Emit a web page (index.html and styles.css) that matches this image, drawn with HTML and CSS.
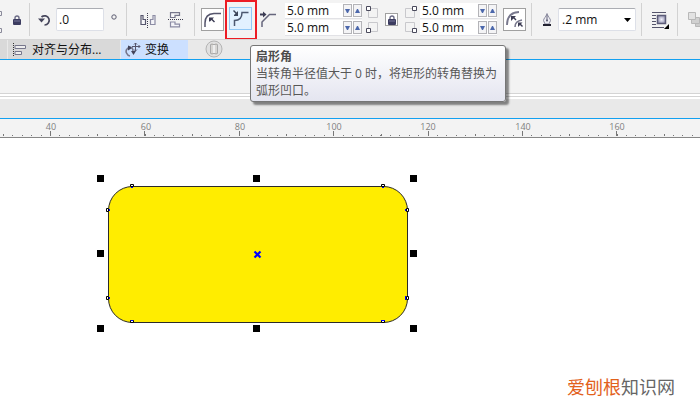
FILE: index.html
```html
<!DOCTYPE html>
<html lang="zh-CN">
<head>
<meta charset="utf-8">
<title>变换</title>
<link rel="stylesheet" href="styles.css">
</head>
<body>
<svg class="defs" aria-hidden="true">
  <defs>
    <radialGradient id="glow"><stop offset="0" stop-color="#f0f0fa"/><stop offset="1" stop-color="#9c9cb8"/></radialGradient>
    <symbol id="down" viewBox="0 0 5 4"><path d="M0 0h5L3 4H2z" fill="#4c68ac"/></symbol>
    <symbol id="up" viewBox="0 0 5 4"><path d="M0 4h5L3 0H2z" fill="#4c68ac"/></symbol>
    <symbol id="lock" viewBox="0 0 8 10"><path d="M2 5V3a2 2 0 0 1 4 0v2" fill="none" stroke="#6b6b86" stroke-width="1.4"/><rect x="0" y="4" width="8" height="6" rx="1" fill="#3c3c60"/><path d="M1 6h6" stroke="#77779a"/></symbol>
  </defs>
</svg>

<header class="toolbar">
  <div class="group group-lock">
    <svg width="2" height="26" viewBox="0 0 2 26"><path d="M0 4.5h1.5v4H0M0 21.5h1.5v4H0" fill="none" stroke="#8a8a9a"/></svg>
    <button class="plain" type="button" aria-label="锁定比率"><svg width="8" height="10"><use href="#lock"/></svg></button>
  </div>

  <div class="group group-angle">
    <svg width="14" height="14" viewBox="0 0 14 14"><path d="M3.500 4A4.600 4.600 0 1 1 6.500 12" fill="none" stroke="#46465c" stroke-width="1.700"/><path d="M0 5.500h7L3.500 9.500z" fill="#46465c"/></svg>
    <input class="field angle" type="text" value=".0" aria-label="旋转角度">
    <svg class="degree" width="6" height="6" viewBox="0 0 6 6"><circle cx="3" cy="3" r="2.2" fill="none" stroke="#5c5c70"/></svg>
  </div>

  <div class="group group-mirror">
    <button class="plain" type="button" aria-label="水平镜像"><svg width="16" height="16" viewBox="0 0 16 16"><path d="M1 3.500h2v4h2.500v5H1z" fill="#f8f8fa" stroke="#55556c" stroke-width="1.2"/><path d="M15 3.500h-2v4h-2.500v5H15z" fill="#f4f4f8" stroke="#8c8ca4" stroke-width="1.2"/><path d="M7.500 1v15" stroke="#3c3c4e" stroke-dasharray="1 1"/></svg></button>
    <button class="plain" type="button" aria-label="垂直镜像"><svg width="16" height="16" viewBox="0 0 16 16"><path d="M2.500.7h9v2.600H7v2.200H2.500z" fill="#f8f8fa" stroke="#77778c" stroke-width="1.2"/><path d="M2.500 14.800h9v-2.600H7V10H2.500z" fill="#f4f4f8" stroke="#8c8ca4" stroke-width="1.2"/><path d="M0 7.500h16" stroke="#3c3c4e" stroke-dasharray="1 1"/></svg></button>
  </div>

  <div class="group group-corner">
    <button class="boxed" type="button" aria-label="圆角"><svg width="21" height="21" viewBox="0 0 21 21"><path d="M3 18v-4Q3 5 12 4.500h7" fill="none" stroke="#55556c" stroke-width="1.500"/><path d="M7 8.500h5L10.500 10l2.500 2.500-1 1L9.500 11 8 12.500H7z" fill="#3c3c54"/></svg></button>
    <span class="marked">
      <button class="boxed active" type="button" aria-label="扇形角"><svg width="21" height="21" viewBox="0 0 21 21"><path d="M4.500 18v-5.500Q12 12.500 12 4.500h6.500" fill="none" stroke="#4c5870" stroke-width="1.500"/><path d="M8 8V3L6.500 4.500 4 2 3 3l2.500 2.500L4 7v1z" fill="#3c4458"/></svg></button>
    </span>
    <button class="plain chamfer" type="button" aria-label="倒棱角"><svg width="17" height="17" viewBox="0 0 17 17"><path d="M2 16v-5L9.500 3.500H16" fill="none" stroke="#66667c" stroke-width="1.500"/><path d="M0 3.500h4" stroke="#3c3c54" stroke-width="2"/><path d="M3 .5l3.500 3L3 6.500z" fill="#3c3c54"/></svg></button>
    <div class="pair">
      <div class="spin"><input type="text" value="5.0 mm" aria-label="左上角半径"><button type="button" aria-label="减"><svg width="5" height="4"><use href="#down"/></svg></button><button type="button" aria-label="加"><svg width="5" height="4"><use href="#up"/></svg></button></div>
      <div class="spin"><input type="text" value="5.0 mm" aria-label="左下角半径"><button type="button" aria-label="减"><svg width="5" height="4"><use href="#down"/></svg></button><button type="button" aria-label="加"><svg width="5" height="4"><use href="#up"/></svg></button></div>
    </div>
    <svg class="corners" width="12" height="28" viewBox="0 0 12 28"><path d="M2.500 2.500h9v9h-9zM2.500 16.500h9v9h-9z" fill="none" stroke="#c8c8cc"/><path d="M.5.5h4v4h-4zM.5 22.500h4v4h-4z" fill="#fff" stroke="#4a4a5c"/></svg>
    <button class="boxed small" type="button" aria-label="同时编辑所有角"><svg width="8" height="10"><use href="#lock"/></svg></button>
    <svg class="corners" width="12" height="28" viewBox="0 0 12 28"><path d="M.5 2.500h9v9h-9zM.5 16.500h9v9h-9z" fill="none" stroke="#c8c8cc"/><path d="M7.500.5h4v4h-4zM7.500 22.500h4v4h-4z" fill="#fff" stroke="#4a4a5c"/></svg>
    <div class="pair">
      <div class="spin"><input type="text" value="5.0 mm" aria-label="右上角半径"><button type="button" aria-label="减"><svg width="5" height="4"><use href="#down"/></svg></button><button type="button" aria-label="加"><svg width="5" height="4"><use href="#up"/></svg></button></div>
      <div class="spin"><input type="text" value="5.0 mm" aria-label="右下角半径"><button type="button" aria-label="减"><svg width="5" height="4"><use href="#down"/></svg></button><button type="button" aria-label="加"><svg width="5" height="4"><use href="#up"/></svg></button></div>
    </div>
    <button class="boxed relative" type="button" aria-label="相对角缩放"><svg width="21" height="21" viewBox="0 0 21 21"><path d="M3 16Q3 3.500 15 3" fill="none" stroke="#77778c" stroke-width="1.800"/><path d="M11 18q0-6 7-7" fill="none" stroke="#77778c" stroke-width="1.500"/><path d="M7 7h5l-1.500 1.500 2 2-1 1-2-2L7 12zM14 13.500h4.500L17 15l2 2-1 1-2-2-2 2z" fill="#3c3c54"/></svg></button>
  </div>

  <div class="group group-outline">
    <svg width="10" height="14" viewBox="0 0 10 14"><path d="M5 .5C4 4 1.500 5.500 1.500 7.500L3 11h4l1.500-3.500C8.500 5.500 6 4 5 .5z" fill="#eeeef4" stroke="#8c8ca0"/><path d="M5 2v5" stroke="#66667c"/><circle cx="5" cy="7.500" r="1" fill="#55556c"/><path d="M1 11h8v2H1z" fill="#222230"/></svg>
    <span class="select-wrap">
      <select class="field width" aria-label="轮廓宽度"><option>.2 mm</option></select>
      <svg class="arrow" width="7" height="4" viewBox="0 0 7 4"><path d="M0 0h7L3.500 4z" fill="#000"/></svg>
    </span>
  </div>

  <div class="group group-wrap">
    <button class="plain" type="button" aria-label="文本换行"><svg width="18" height="18" viewBox="0 0 18 18"><path d="M0 .5h14M0 3.500h4M0 6.500h4M0 9.500h4M0 12.500h4M0 15.500h12" stroke="#55556c"/><rect x="5.500" y="3.500" width="8" height="8" fill="url(#glow)" stroke="#5c5c78" stroke-width="1.500"/><path d="M17 12v5h-5z" fill="#000"/></svg></button>
  </div>
  <div class="group group-order">
    <svg width="16" height="16" viewBox="0 0 16 16"><g stroke="#b8b8b8"><path d="M7.500 7.500h8v7h-8z" fill="#ccc"/><path d="M3.500 5.500h8v6h-8z" fill="#d0d0d0"/><path d="M.5.5h7v7h-7z" fill="#e2e2e2"/></g></svg>
  </div>
</header>

<nav class="tabs">
  <span class="tab stub"></span>
  <button class="tab align" type="button">
    <svg width="14" height="14" viewBox="0 0 14 14"><path d="M.5 0v14" stroke="#333" stroke-dasharray="1 1"/><path d="M2 2.500h10.500v3H2zM2 8.500h6.500v3H2z" fill="#eee" stroke="#77778c"/></svg>
    对齐与分布...
  </button>
  <button class="tab transform" type="button">
    <svg width="16" height="15" viewBox="0 0 16 15"><path d="M5 5.500C1.500 6 .5 9 1.500 11q1 2.500 3.500 3" fill="none" stroke="#77778c" stroke-width="1.600"/><path d="M3 3.500l5 2-5 3z" fill="#44445a"/><path d="M6 5.500q2 .5 2 4" fill="none" stroke="#77778c" stroke-width="1.400"/><path d="M6 9h5l-2.500 4z" fill="#44445a"/><path d="M10.500 1v8M7 4.500h8M9 2.500L10.500 1 12 2.500M9 7.500L10.500 9 12 7.500M13.500 3L15 4.500 13.500 6" fill="none" stroke="#55556c"/></svg>
    变换
  </button>
  <svg class="disc" width="18" height="18" viewBox="0 0 18 18"><circle cx="9" cy="9" r="8" fill="#e0e0e0" stroke="#b4b4b4"/><path d="M5.500 4.500h7v9h-7z" fill="#eee" stroke="#aaa"/><path d="M7 3v12M11 3v12" stroke="#c0bdb8"/></svg>
</nav>

<div class="panel"></div>
<div class="band"></div>

<div class="ruler">
  <svg width="100%" height="18" shape-rendering="crispEdges">
    <path d="M2.800 16.500H4000" stroke="#777" stroke-width="1" stroke-dasharray="1 8.440"/>
    <path d="M3 16H4000" stroke="#777" stroke-width="2" stroke-dasharray="1 46.200"/>
    <path d="M50 14.500H4000" stroke="#777" stroke-width="5" stroke-dasharray="1 93.400"/>
    <g text-anchor="middle"><text x="51" y="11">40</text><text x="146" y="11">60</text><text x="240" y="11">80</text><text x="334" y="11">100</text><text x="428" y="11">120</text><text x="523" y="11">140</text><text x="617" y="11">160</text></g>
  </svg>
</div>

<main class="canvas">
  <svg class="drawing" width="430" height="210" viewBox="0 138 430 210">
    <rect x="108.500" y="186.500" width="299" height="136" rx="24" ry="24" fill="#ffed00" stroke="#2b2a29"/>
    <path d="M97 175h7v7h-7zM253 175h7v7h-7zM410 175h7v7h-7zM97 250h7v7h-7zM410 250h7v7h-7zM97 325h7v7h-7zM253 325h7v7h-7zM410 325h7v7h-7z" fill="#000"/>
    <g fill="#fff" stroke="#000"><path d="M130.500 184.500h3v2h-3zM381.500 184.500h3v2h-3zM130.500 320.500h3v2h-3zM381.500 320.500h3v2h-3zM106.500 208.500h2v3h-2zM406.500 208.500h2v3h-2zM106.500 296.500h2v3h-2zM406.500 296.500h2v3h-2z"/></g>
    <path d="M131 187.500h2M382 187.500h2M131 320.500h2M381 320.500h4M109.500 209v2M405.500 209v2M109.500 297v2M405.500 296v4" stroke="#00f"/>
    <path d="M254.500 251.500l6 6M260.500 251.500l-6 6" stroke="#0000ff" stroke-width="2.200"/>
  </svg>
  <p class="brand"><span>爱刨根</span>知识网</p>
</main>

<div class="tooltip" role="tooltip">
  <strong>扇形角</strong>
  <p>当转角半径值大于 0 时，将矩形的转角替换为弧形凹口。</p>
</div>
</body>
</html>
```
FILE: styles.css
```css
* { box-sizing: border-box; }

body {
  margin: 0;
  min-height: 100vh;
  display: flex;
  flex-direction: column;
  overflow: hidden;
  position: relative;
  background: #fff;
  color: #111;
  font: 12px/16px "Open Sans", "Noto Sans CJK SC", sans-serif;
}

svg { display: block; flex: none; }
button, input, select { font: inherit; color: inherit; margin: 0; padding: 0; border-radius: 0; }
p { margin: 0; }
.defs { position: absolute; width: 0; height: 0; }

.toolbar {
  display: flex;
  height: 40px;
  padding: 3px 0;
  overflow: hidden;
  background: #f3f3f3;
  border-bottom: 1px solid #d6d6d6;
}

.group {
  display: flex;
  align-items: center;
  flex: none;
  border-right: 1px solid #d2d2d2;
}
.group-lock { gap: 11px; padding-right: 8px; }
.group-angle { gap: 4px; padding: 0 9px 0 8px; }
.group-mirror { gap: 12px; padding: 0 10px 0 13px; }
.group-corner { padding: 0 5px 0 6px; }
.group-outline { gap: 6px; padding: 0 5px 0 10px; }
.group-wrap { padding: 2px 7px 0 10px; }
.group-order { padding-left: 10px; border: 0; }

.plain { display: block; border: 0; background: none; }

.field {
  height: 23px;
  border: 1px solid #dde0e8;
  border-top-color: #abadb3;
  border-radius: 2px;
  background: #fff;
}
.angle { width: 48px; padding-left: 2px; }
.degree { margin: 0 0 6px 3px; }

.boxed {
  display: flex;
  align-items: center;
  justify-content: center;
  flex: none;
  width: 23px;
  height: 23px;
  border: 1px solid #a0a0a0;
  background: #fff;
}
.boxed.active { border-color: #90c8f6; background: #e2f1ff; }
.boxed.small { width: 13px; height: 13px; margin: 0 7px; }
.boxed.relative { margin-left: 6px; }

.marked {
  flex: none;
  display: flex;
  align-items: center;
  width: 32px;
  height: 40px;
  margin: 0 3px 0 1px;
  padding: 4px 2px 7px;
  border: 2px solid #ed1c24;
  position: relative;
}
.chamfer { margin-right: 8px; }

.pair { display: flex; flex-direction: column; gap: 1px; flex: none; width: 77px; }
.pair + .corners { margin-left: 4px; }
.corners + .pair { margin-left: 3px; }
.spin {
  display: flex;
  align-items: center;
  gap: 1px;
  height: 16px;
  background: #fff;
  border-bottom: 1px solid #e2e2e6;
}
.spin input { flex: 1; min-width: 0; height: 15px; padding-left: 2px; border: 0; background: none; }
.spin button {
  display: flex;
  align-items: center;
  justify-content: center;
  width: 9px;
  height: 13px;
  border: 1px solid #b4b4b8;
  background: #f4f4f6;
}

.select-wrap { position: relative; }
.width { display: block; width: 78px; padding-left: 3px; appearance: none; }
.arrow { position: absolute; right: 5px; top: 10px; pointer-events: none; }

.tabs {
  display: flex;
  height: 20px;
  background: #e9e9e9;
  border-bottom: 1px solid #12a0f0;
}
.tab {
  display: flex;
  align-items: center;
  gap: 5px;
  height: 19px;
  border: 0;
  background: #d9d9d9;
  white-space: nowrap;
}
.stub { width: 7px; margin-right: 1px; }
.align { width: 112px; margin-right: 1px; padding-left: 5px; }
.transform { width: 67px; padding-left: 4px; gap: 4px; background: #cce0ff; }
.disc { margin-left: 17px; }

.panel {
  height: 37px;
  background: #f3f3f3;
  background-clip: padding-box;
  border-bottom: 4px double #d4d4d4;
}
.band { height: 21px; background: #e9e9e9; border-top: 2px solid #fff; }

.ruler {
  height: 20px;
  overflow: hidden;
  background: #f3f3f3;
  border-top: 1px solid #12a0f0;
  border-bottom: 1px solid #868686;
}
.ruler text { font-size: 9px; fill: #808080; }

.canvas { flex: 1; position: relative; }
.brand {
  position: absolute;
  right: 25px;
  bottom: 7px;
  color: #666;
  font: 18px/24px "Noto Sans CJK SC", sans-serif;
}
.brand span { color: #e2611c; }

.tooltip {
  position: absolute;
  left: 250px;
  top: 45px;
  width: 256px;
  padding: 2px 4px 2px 5px;
  border: 1px solid #767676;
  border-radius: 3px;
  background: linear-gradient(#fff, #e4e5f0);
  box-shadow: 3px 3px 2px rgba(0, 0, 0, .45);
  color: #575757;
  line-height: 17px;
}
.tooltip strong { display: block; color: #4c4c4c; }
```
